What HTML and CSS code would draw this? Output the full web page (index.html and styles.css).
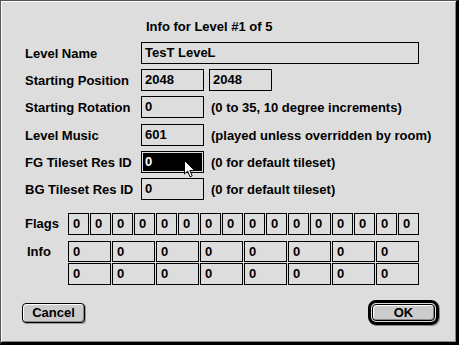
FILE: index.html
```html
<!DOCTYPE html>
<html lang="en">
<head>
  <meta charset="UTF-8" />
  <title>Info for Level</title>
  <link rel="stylesheet" href="styles.css">
</head>
<body>

  <!-- dialog window -->
  <div class="window">
    <div class="title">Info for Level #1 of 5</div>

    <div class="form">
      <div class="row">
        <span class="label">Level Name</span>
        <div class="field wide">TesT LeveL</div>
      </div>
      <div class="row">
        <span class="label">Starting Position</span>
        <div class="field">2048</div>
        <div class="field second">2048</div>
      </div>
      <div class="row">
        <span class="label">Starting Rotation</span>
        <div class="field">0</div>
        <span class="hint">(0 to 35, 10 degree increments)</span>
      </div>
      <div class="row shift">
        <span class="label">Level Music</span>
        <div class="field">601</div>
        <span class="hint">(played unless overridden by room)</span>
      </div>
      <div class="row">
        <span class="label">FG Tileset Res ID</span>
        <div class="field selected">0
          <svg class="pointer" width="12" height="18" viewBox="0 0 12 18">
            <path d="M0.5 0.5 V14 L3.6 11 L6 16.8 L8.2 15.8 L5.9 10.5 H10.5 Z" fill="#fff" stroke="#000" stroke-width="1"/>
          </svg>
        </div>
        <span class="hint">(0 for default tileset)</span>
      </div>
      <div class="row">
        <span class="label">BG Tileset Res ID</span>
        <div class="field">0</div>
        <span class="hint">(0 for default tileset)</span>
      </div>
    </div>

    <!-- flags -->
    <div class="flags">
      <span class="tlabel">Flags</span>
      <div class="cell">0</div><div class="cell">0</div><div class="cell">0</div><div class="cell">0</div>
      <div class="cell">0</div><div class="cell">0</div><div class="cell">0</div><div class="cell">0</div>
      <div class="cell">0</div><div class="cell">0</div><div class="cell">0</div><div class="cell">0</div>
      <div class="cell">0</div><div class="cell">0</div><div class="cell">0</div><div class="cell">0</div>
    </div>

    <!-- info -->
    <div class="info">
      <span class="tlabel info-label">Info</span>
      <div class="info-grid">
        <div class="cell">0</div><div class="cell">0</div><div class="cell">0</div><div class="cell">0</div>
        <div class="cell">0</div><div class="cell">0</div><div class="cell">0</div><div class="cell">0</div>
        <div class="cell">0</div><div class="cell">0</div><div class="cell">0</div><div class="cell">0</div>
        <div class="cell">0</div><div class="cell">0</div><div class="cell">0</div><div class="cell">0</div>
      </div>
    </div>

    <div class="buttons">
      <button class="btn">Cancel</button>
      <div class="ok-ring"><button class="btn ok">OK</button></div>
    </div>
  </div>

</body>
</html>
```

FILE: styles.css
```css
/* base */
* {
  box-sizing: border-box;
}
body {
  margin: 0;
  background: #dddddd;
  font-family: "Liberation Sans", Arial, sans-serif;
  font-weight: bold;
  font-size: 13px;
  color: #000;
}

/* window frame */
.window {
  width: 459px;
  height: 345px;
  background: #dddddd;
  border: 1px solid #555;
  border-right: 3px solid #000;
  border-bottom: 3px solid #000;
  box-shadow: inset 1px 1px 0 #fff, inset -1px -1px 0 #888;
  padding-left: 24px;
}

.title {
  height: 41px;
  padding: 18px 0 0 121px;
  line-height: 16px;
}

/* form rows */
.form {
  display: flex;
  flex-direction: column;
  gap: 5px;
}
.row {
  display: flex;
  align-items: center;
  height: 22px;
}
.row.shift {
  margin-top: 1px;
}
.label {
  width: 116px;
  flex-shrink: 0;
  white-space: nowrap;
}
.field {
  position: relative;
  width: 63px;
  height: 22px;
  border: 1px solid #000;
  padding-left: 3px;
  line-height: 20px;
  flex-shrink: 0;
}
.field.wide {
  width: 278px;
}
.field.second {
  margin-left: 5px;
}
.field.selected {
  background: #000;
  color: #fff;
  box-shadow: inset 0 0 0 1px #ddd;
}
.pointer {
  position: absolute;
  left: 42px;
  top: 8px;
}
.hint {
  margin-left: 7px;
  white-space: nowrap;
}

/* flags + info tables */
.flags {
  display: flex;
  gap: 1px;
  margin-top: 13px;
  height: 22px;
}
.tlabel {
  width: 42px;
  line-height: 22px;
  flex-shrink: 0;
}
.flags .cell {
  width: 21px;
  height: 22px;
}
.cell {
  border: 1px solid #000;
  padding-left: 4px;
  line-height: 19px;
}
.info {
  display: flex;
  gap: 1px;
  margin-top: 6px;
}
.info-label {
  padding-left: 2px;
  line-height: 21px;
}
.info-grid {
  display: grid;
  grid-template-columns: repeat(8, 43px);
  grid-template-rows: 21px 22px;
  gap: 1px;
}

/* buttons */
.buttons {
  display: flex;
  justify-content: space-between;
  align-items: center;
  margin-top: 15px;
  margin-left: -3px;
  padding-right: 17px;
}
.btn {
  width: 63px;
  height: 20px;
  padding: 0;
  border: 1px solid #000;
  border-radius: 4px;
  background: #cccccc;
  box-shadow: inset 1px 1px 0 #fff, inset -1px -1px 0 #888, 1px 1px 0 #999;
  font-family: "Liberation Sans", Arial, sans-serif;
  font-weight: bold;
  font-size: 13px;
  color: #000;
}
.ok-ring {
  width: 71px;
  height: 25px;
  border: 3px solid #000;
  border-radius: 8px;
  padding: 1px;
  box-shadow: inset 0 0 0 1px #ddd, 1px 1px 0 #888;
}
.btn.ok {
  height: 17px;
  box-shadow: inset 1px 1px 0 #fff, inset -1px -1px 0 #888;
}
```
